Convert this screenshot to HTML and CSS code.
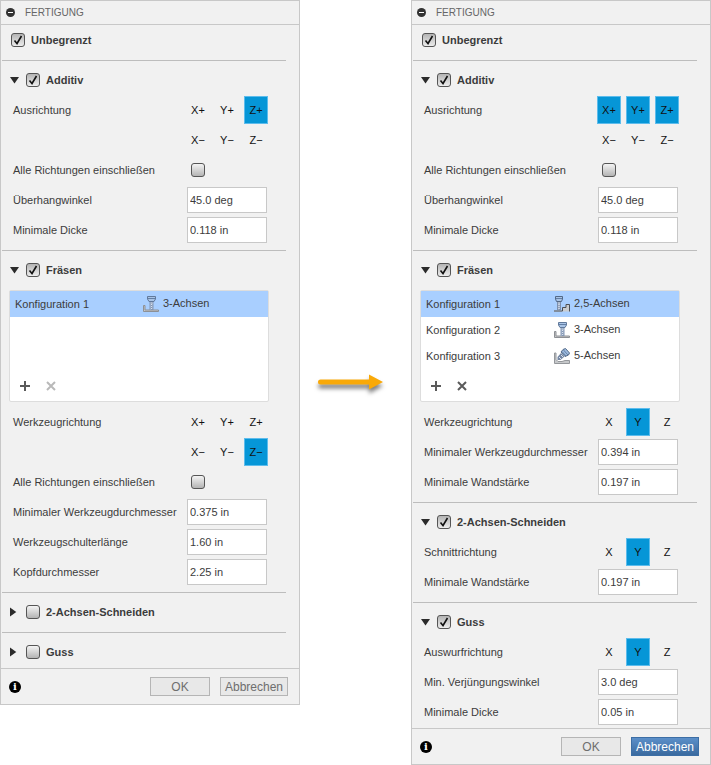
FILE: index.html
```html
<!DOCTYPE html>
<html lang="de">
<head>
    <meta charset="UTF-8">
    <meta name="viewport" content="width=device-width, initial-scale=1.0">
    <title>Fertigung</title>
    <link rel="stylesheet" href="styles.css">
</head>
<body>

<!-- Tool icons shared by both lists -->
<svg class="sprite" aria-hidden="true">
    <symbol id="axis25" viewBox="0 0 16 16">
        <path d="M0 14.5H8.5V11.5H11.5V8.5H15.5V15.5H0Z" fill="#c9ccd0"/>
        <path d="M0 15H8.5V11.5H12V8.5H15.5V15.5" fill="none" stroke="#4b4f55"/>
        <path d="M1.5 .5H8.5V3L7.5 5.5H2.5L1.5 3Z" fill="#a9c4e6" stroke="#536987"/>
        <path d="M2 2.5H8" stroke="#637fa5"/>
        <path d="M3 6H7V14H3Z" fill="#7d90ae"/>
        <path d="M4 7H6M4 9L6 8M4 11L6 10M4 13L6 12" stroke="#dbe3ef"/>
    </symbol>
    <symbol id="axis3" viewBox="0 0 16 16">
        <path d="M.5 9.5H2V14H15.5V15.5H.5Z" fill="#c9c9c9" stroke="#8d9095"/>
        <path d="M4.500 .5H12.500V3L11 5.500H6L4.500 3Z" fill="#a9c4e6" stroke="#61799b"/>
        <path d="M5 2.500H12" stroke="#637fa5"/>
        <path d="M6.500 6H10.500V14H6.500Z" fill="#8296b4"/>
        <path d="M7.500 7H9.500M7.500 9L9.500 8M7.500 11L9.500 10M7.500 13L9.500 12" stroke="#dbe3ef"/>
    </symbol>
    <symbol id="axis5" viewBox="0 0 16 16">
        <path d="M.5 5V15.5H15.500V12.500H11L8 13.500H4L2 11.500V5Z" fill="#c6c8ca" stroke="#94979b"/>
        <path d="M9 1.500L11.500 .5L15.500 5L14.500 7L11 8.500L7 4Z" fill="#9fbce0" stroke="#536987"/>
        <path d="M9.500 2L14 7M8 3.500L12 8" stroke="#637fa5"/>
        <path d="M7 5L10.500 8.500L6.500 12H3.500V9Z" fill="#7587a4"/>
        <path d="M7 7L9 9M5 9L7 11" stroke="#dbe3ef"/>
    </symbol>
</svg>

<main class="compare">

    <!-- Left dialog -->
    <form class="panel" onsubmit="return false">
        <header class="panel-header">
            <button type="button" class="collapse" aria-label="Einklappen"></button>
            <h1>FERTIGUNG</h1>
        </header>

        <div class="section-head top">
            <input type="checkbox" id="l-unlimited" checked>
            <label for="l-unlimited">Unbegrenzt</label>
        </div>

        <section class="section">
            <div class="section-head">
                <button type="button" class="arrow open" aria-label="Additiv" aria-expanded="true"></button>
                <input type="checkbox" id="l-additive" checked>
                <label for="l-additive">Additiv</label>
            </div>
            <div class="row">
                <span class="name" id="l-orient">Ausrichtung</span>
                <div class="axes" role="group" aria-labelledby="l-orient">
                    <button type="button">X+</button>
                    <button type="button">Y+</button>
                    <button type="button" class="on">Z+</button>
                    <button type="button">X−</button>
                    <button type="button">Y−</button>
                    <button type="button">Z−</button>
                </div>
            </div>
            <div class="row">
                <label class="name" for="l-all1">Alle Richtungen einschließen</label>
                <div class="control"><input type="checkbox" id="l-all1"></div>
            </div>
            <div class="row">
                <label class="name" for="l-overhang">Überhangwinkel</label>
                <input type="text" id="l-overhang" value="45.0 deg">
            </div>
            <div class="row">
                <label class="name" for="l-thick">Minimale Dicke</label>
                <input type="text" id="l-thick" value="0.118 in">
            </div>
        </section>

        <section class="section">
            <div class="section-head">
                <button type="button" class="arrow open" aria-label="Fräsen" aria-expanded="true"></button>
                <input type="checkbox" id="l-milling" checked>
                <label for="l-milling">Fräsen</label>
            </div>
            <div class="list">
                <table>
                    <tr class="selected">
                        <td>Konfiguration 1</td>
                        <td class="axis"><svg class="tool"><use href="#axis3"/></svg>3-Achsen</td>
                    </tr>
                </table>
                <div class="list-tools">
                    <button type="button" aria-label="Hinzufügen"><svg viewBox="0 0 10 10"><path d="M5 0V10M0 5H10"/></svg></button>
                    <button type="button" aria-label="Löschen" disabled><svg viewBox="0 0 10 10"><path d="M1 1L9 9M9 1L1 9"/></svg></button>
                </div>
            </div>
            <div class="row">
                <span class="name" id="l-tooldir">Werkzeugrichtung</span>
                <div class="axes" role="group" aria-labelledby="l-tooldir">
                    <button type="button">X+</button>
                    <button type="button">Y+</button>
                    <button type="button">Z+</button>
                    <button type="button">X−</button>
                    <button type="button">Y−</button>
                    <button type="button" class="on">Z−</button>
                </div>
            </div>
            <div class="row">
                <label class="name" for="l-all2">Alle Richtungen einschließen</label>
                <div class="control"><input type="checkbox" id="l-all2"></div>
            </div>
            <div class="row">
                <label class="name" for="l-diameter">Minimaler Werkzeugdurchmesser</label>
                <input type="text" id="l-diameter" value="0.375 in">
            </div>
            <div class="row">
                <label class="name" for="l-shoulder">Werkzeugschulterlänge</label>
                <input type="text" id="l-shoulder" value="1.60 in">
            </div>
            <div class="row">
                <label class="name" for="l-head">Kopfdurchmesser</label>
                <input type="text" id="l-head" value="2.25 in">
            </div>
        </section>

        <section class="section">
            <div class="section-head">
                <button type="button" class="arrow" aria-label="2-Achsen-Schneiden" aria-expanded="false"></button>
                <input type="checkbox" id="l-cutting">
                <label for="l-cutting">2-Achsen-Schneiden</label>
            </div>
        </section>

        <section class="section">
            <div class="section-head">
                <button type="button" class="arrow" aria-label="Guss" aria-expanded="false"></button>
                <input type="checkbox" id="l-casting">
                <label for="l-casting">Guss</label>
            </div>
        </section>

        <footer class="panel-footer">
            <button type="button" class="info" aria-label="Info">i</button>
            <button type="submit" class="btn ok">OK</button>
            <button type="button" class="btn cancel">Abbrechen</button>
        </footer>
    </form>

    <svg class="pointer" viewBox="0 0 76 30" aria-hidden="true">
        <path d="M2.500 11.500H51V6.500L65 14L51 21.500V16.500H2.500A2.500 2.500 0 0 1 2.500 11.500Z" fill="#f9a908"/>
    </svg>

    <!-- Right dialog -->
    <form class="panel" onsubmit="return false">
        <header class="panel-header">
            <button type="button" class="collapse" aria-label="Einklappen"></button>
            <h1>FERTIGUNG</h1>
        </header>

        <div class="section-head top">
            <input type="checkbox" id="r-unlimited" checked>
            <label for="r-unlimited">Unbegrenzt</label>
        </div>

        <section class="section">
            <div class="section-head">
                <button type="button" class="arrow open" aria-label="Additiv" aria-expanded="true"></button>
                <input type="checkbox" id="r-additive" checked>
                <label for="r-additive">Additiv</label>
            </div>
            <div class="row">
                <span class="name" id="r-orient">Ausrichtung</span>
                <div class="axes" role="group" aria-labelledby="r-orient">
                    <button type="button" class="on">X+</button>
                    <button type="button" class="on">Y+</button>
                    <button type="button" class="on">Z+</button>
                    <button type="button">X−</button>
                    <button type="button">Y−</button>
                    <button type="button">Z−</button>
                </div>
            </div>
            <div class="row">
                <label class="name" for="r-all">Alle Richtungen einschließen</label>
                <div class="control"><input type="checkbox" id="r-all"></div>
            </div>
            <div class="row">
                <label class="name" for="r-overhang">Überhangwinkel</label>
                <input type="text" id="r-overhang" value="45.0 deg">
            </div>
            <div class="row">
                <label class="name" for="r-thick">Minimale Dicke</label>
                <input type="text" id="r-thick" value="0.118 in">
            </div>
        </section>

        <section class="section">
            <div class="section-head">
                <button type="button" class="arrow open" aria-label="Fräsen" aria-expanded="true"></button>
                <input type="checkbox" id="r-milling" checked>
                <label for="r-milling">Fräsen</label>
            </div>
            <div class="list">
                <table>
                    <tr class="selected">
                        <td>Konfiguration 1</td>
                        <td class="axis"><svg class="tool"><use href="#axis25"/></svg>2,5-Achsen</td>
                    </tr>
                    <tr>
                        <td>Konfiguration 2</td>
                        <td class="axis"><svg class="tool"><use href="#axis3"/></svg>3-Achsen</td>
                    </tr>
                    <tr>
                        <td>Konfiguration 3</td>
                        <td class="axis"><svg class="tool"><use href="#axis5"/></svg>5-Achsen</td>
                    </tr>
                </table>
                <div class="list-tools">
                    <button type="button" aria-label="Hinzufügen"><svg viewBox="0 0 10 10"><path d="M5 0V10M0 5H10"/></svg></button>
                    <button type="button" aria-label="Löschen"><svg viewBox="0 0 10 10"><path d="M1 1L9 9M9 1L1 9"/></svg></button>
                </div>
            </div>
            <div class="row">
                <span class="name" id="r-tooldir">Werkzeugrichtung</span>
                <div class="axes" role="group" aria-labelledby="r-tooldir">
                    <button type="button">X</button>
                    <button type="button" class="on">Y</button>
                    <button type="button">Z</button>
                </div>
            </div>
            <div class="row">
                <label class="name" for="r-diameter">Minimaler Werkzeugdurchmesser</label>
                <input type="text" id="r-diameter" value="0.394 in">
            </div>
            <div class="row">
                <label class="name" for="r-wall1">Minimale Wandstärke</label>
                <input type="text" id="r-wall1" value="0.197 in">
            </div>
        </section>

        <section class="section">
            <div class="section-head">
                <button type="button" class="arrow open" aria-label="2-Achsen-Schneiden" aria-expanded="true"></button>
                <input type="checkbox" id="r-cutting" checked>
                <label for="r-cutting">2-Achsen-Schneiden</label>
            </div>
            <div class="row">
                <span class="name" id="r-cutdir">Schnittrichtung</span>
                <div class="axes" role="group" aria-labelledby="r-cutdir">
                    <button type="button">X</button>
                    <button type="button" class="on">Y</button>
                    <button type="button">Z</button>
                </div>
            </div>
            <div class="row">
                <label class="name" for="r-wall2">Minimale Wandstärke</label>
                <input type="text" id="r-wall2" value="0.197 in">
            </div>
        </section>

        <section class="section">
            <div class="section-head">
                <button type="button" class="arrow open" aria-label="Guss" aria-expanded="true"></button>
                <input type="checkbox" id="r-casting" checked>
                <label for="r-casting">Guss</label>
            </div>
            <div class="row">
                <span class="name" id="r-eject">Auswurfrichtung</span>
                <div class="axes" role="group" aria-labelledby="r-eject">
                    <button type="button">X</button>
                    <button type="button" class="on">Y</button>
                    <button type="button">Z</button>
                </div>
            </div>
            <div class="row">
                <label class="name" for="r-draft">Min. Verjüngungswinkel</label>
                <input type="text" id="r-draft" value="3.0 deg">
            </div>
            <div class="row">
                <label class="name" for="r-cast-thick">Minimale Dicke</label>
                <input type="text" id="r-cast-thick" value="0.05 in">
            </div>
        </section>

        <footer class="panel-footer">
            <button type="button" class="info" aria-label="Info">i</button>
            <button type="submit" class="btn ok">OK</button>
            <button type="button" class="btn cancel primary">Abbrechen</button>
        </footer>
    </form>

</main>

</body>
</html>
```
FILE: styles.css
```css
* {
    box-sizing: border-box;
}

body {
    margin: 0;
    background-color: #fff;
    color: #3c3c3c;
    font-family: "Liberation Sans", Arial, sans-serif;
    font-size: 11px;
}

button, input {
    margin: 0;
    padding: 0;
    font-family: inherit;
    font-size: 11px;
    color: inherit;
}

button {
    border: none;
    background: none;
    cursor: pointer;
}

.sprite {
    display: none;
}

.compare {
    display: grid;
    grid-template-columns: 1fr 111px 1fr;
    align-items: start;
}

.pointer {
    width: 76px;
    height: 30px;
    align-self: center;
    justify-self: center;
    overflow: visible;
    filter: drop-shadow(0 4px 2px rgba(0, 0, 0, 0.5));
}

/* Dialog */
.panel {
    border: 1px solid #c8c8c8;
    background-color: #f1f1f1;
}

.panel-header {
    display: flex;
    align-items: center;
    gap: 10px;
    height: 24px;
    padding-left: 5px;
    border-bottom: 1px solid #c8c8c8;
}

.panel-header h1 {
    margin: 0;
    font-size: 10px;
    font-weight: normal;
    color: #666;
}

.collapse {
    display: flex;
    align-items: center;
    justify-content: center;
    width: 9px;
    height: 9px;
    border-radius: 50%;
    background-color: #333;
}

.collapse::before {
    content: "";
    width: 5px;
    height: 1px;
    background-color: #fff;
}

/* Sections */
.section {
    margin: 0 13px 0 1px;
    padding: 4px 0 5px;
    border-top: 1px solid #bdbdbd;
}

.section:last-of-type {
    padding-bottom: 1px;
}

.section-head {
    display: flex;
    align-items: center;
    height: 30px;
    padding-left: 8px;
    font-size: 11px;
    font-weight: bold;
}

.section-head.top {
    margin-bottom: 5px;
    padding-left: 10px;
}

.section-head label {
    margin-left: 6px;
}

.arrow {
    width: 9px;
    height: 10px;
    margin-right: 7px;
    background-color: #2b2b2b;
    clip-path: polygon(0 5%, 70% 50%, 0 95%);
}

.arrow.open {
    clip-path: polygon(0 20%, 100% 20%, 50% 85%);
}

input[type="checkbox"] {
    appearance: none;
    flex: none;
    width: 14px;
    height: 14px;
    border: 1px solid #555;
    border-radius: 3px;
    background: linear-gradient(#f4f4f4, #b4b4b4);
}

input[type="checkbox"]:checked {
    background:
        url("data:image/svg+xml,%3Csvg xmlns='http://www.w3.org/2000/svg' viewBox='0 0 12 12'%3E%3Cpath d='M2.500 6.500L5 9.500L9.500 2' fill='none' stroke='%23111' stroke-width='1.600'/%3E%3C/svg%3E"),
        linear-gradient(#b4b4b4, #ececec);
}

.row {
    display: flex;
    justify-content: space-between;
    padding: 0 18px 0 11px;
}

.name {
    line-height: 30px;
    white-space: nowrap;
}

.control {
    display: flex;
    align-items: center;
    width: 82px;
    padding-left: 5px;
}

input[type="text"] {
    width: 80px;
    height: 26px;
    margin: 2px 1px;
    padding: 0 2px 1px;
    border: 1px solid #c8c8c8;
    background-color: #fff;
}

.axes {
    display: grid;
    grid-template-columns: repeat(3, 24px);
    grid-auto-rows: 28px;
    gap: 2px 5px;
    padding: 1px 0;
}

.axes button {
    color: #111;
}

.axes .on {
    border: 1px solid #5dbcec;
    background-color: #0696d7;
}

/* Configuration list */
.list {
    display: flex;
    flex-direction: column;
    justify-content: space-between;
    min-height: 112px;
    margin: 5px 17px 5px 7px;
    border: 1px solid #ddd;
    border-radius: 2px;
    background-color: #fff;
}

.list table {
    width: 100%;
    border-collapse: collapse;
    table-layout: fixed;
}

.list td {
    height: 26px;
    padding: 0 0 0 5px;
}

.list .axis {
    padding-left: 4px;
}

.selected {
    background-color: #a9cfff;
}

.tool {
    width: 16px;
    height: 16px;
    margin-right: 4px;
    vertical-align: middle;
}

.list-tools {
    display: flex;
    gap: 16px;
    padding: 0 10px 10px;
}

.list-tools button {
    width: 10px;
    height: 10px;
}

.list-tools svg {
    display: block;
    width: 10px;
    height: 10px;
    fill: none;
    stroke: #5a5a5a;
    stroke-width: 2;
}

.list-tools button:disabled svg {
    stroke: #b9b9b9;
}

/* Footer */
.panel-footer {
    display: flex;
    align-items: center;
    height: 36px;
    padding: 0 11px 0 8px;
    border-top: 1px solid #c8c8c8;
}

.info {
    width: 12px;
    height: 12px;
    margin-right: auto;
    border-radius: 50%;
    background-color: #000;
    color: #fff;
    font-family: "DejaVu Serif", serif;
    font-size: 10px;
    font-weight: bold;
    line-height: 12px;
}

.btn {
    height: 19px;
    border: 1px solid #b5b5b5;
    background-color: #e8e8e8;
    color: #6e6e6e;
    font-size: 12px;
}

.ok {
    width: 60px;
    margin-right: 10px;
}

.cancel {
    width: 68px;
}

.primary {
    border-color: #3c6ea5;
    background: linear-gradient(#5b8fc9, #3a6a9f);
    color: #fff;
}
```
